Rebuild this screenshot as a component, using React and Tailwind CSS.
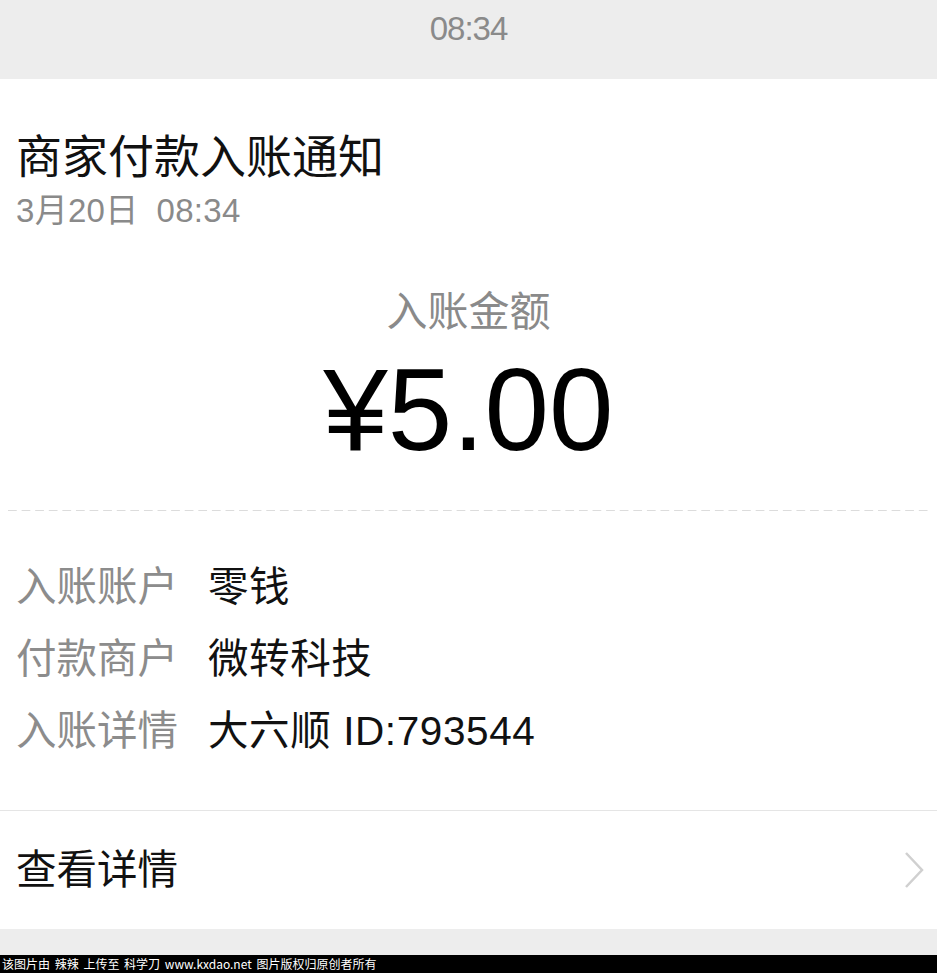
const FONT = "font-['Liberation_Sans','Noto_Sans_CJK_SC',sans-serif]";

const rows = [
  { label: "入账账户", value: "零钱" },
  { label: "付款商户", value: "微转科技" },
  { label: "入账详情", value: "大六顺 ID:793544" },
];

export default function App() {
  return (
    <div className={`${FONT} w-[937px] h-[973px] flex flex-col bg-[#ededed] overflow-hidden`}>
      {/* status time */}
      <div className="h-[79px] flex justify-center pt-[12px]">
        <span className="text-[33px] leading-[33px] text-[#8a8a8a] tracking-[-1px]">08:34</span>
      </div>

      {/* message card */}
      <div className="bg-white flex flex-col">
        <div className="px-4 pt-[51px]">
          <h1 className="text-[46px] leading-[54px] text-[#111]">商家付款入账通知</h1>
          <p className="mt-[8px] text-[33px] leading-[38px] text-[#8a8a8a] tracking-[0.3px]">
            3月20日<span className="inline-block w-[18px]" />08:34
          </p>
        </div>

        <div className="mt-[58px] flex flex-col items-center">
          <p className="text-[41px] leading-[48px] text-[#8a8a8a]">入账金额</p>
          <p className="mt-[14px] text-[116px] leading-[120px] text-black">¥5.00</p>
        </div>

        <div className="mt-[40px] mx-[8px] h-px bg-[linear-gradient(to_right,#dcdcdc_9px,transparent_9px)] bg-[length:13.6px_1px] bg-repeat-x" />

        <div className="mt-[40px] px-4 flex flex-col">
          {rows.map((r) => (
            <div key={r.label} className="flex items-center h-[72px] text-[40.5px] leading-[72px]">
              <span className="w-[192px] shrink-0 text-[#8c8c8c]">{r.label}</span>
              <span className="text-[#111] tracking-[0.6px]">{r.value}</span>
            </div>
          ))}
        </div>

        <div className="mt-[43px] h-px bg-[#e5e5e5]" />

        <div className="h-[118px] flex items-center justify-between pl-4 pr-[12px]">
          <span className="text-[40.5px] leading-[48px] text-[#111]">查看详情</span>
          <svg width="22" height="38" viewBox="0 0 22 38" fill="none">
            <polyline points="3,2 19,19 3,36" stroke="#d0d0d0" strokeWidth="2.5" strokeLinejoin="miter" />
          </svg>
        </div>
      </div>

      <div className="h-[26px]" />

      <div className="h-[18px] bg-black flex items-center px-[2px]">
        <span className="text-[12px] leading-[18px] text-white whitespace-nowrap [word-spacing:2px] font-['Noto_Sans_CJK_SC',sans-serif]">
          该图片由 辣辣 上传至 科学刀 www.kxdao.net 图片版权归原创者所有
        </span>
      </div>
    </div>
  );
}
